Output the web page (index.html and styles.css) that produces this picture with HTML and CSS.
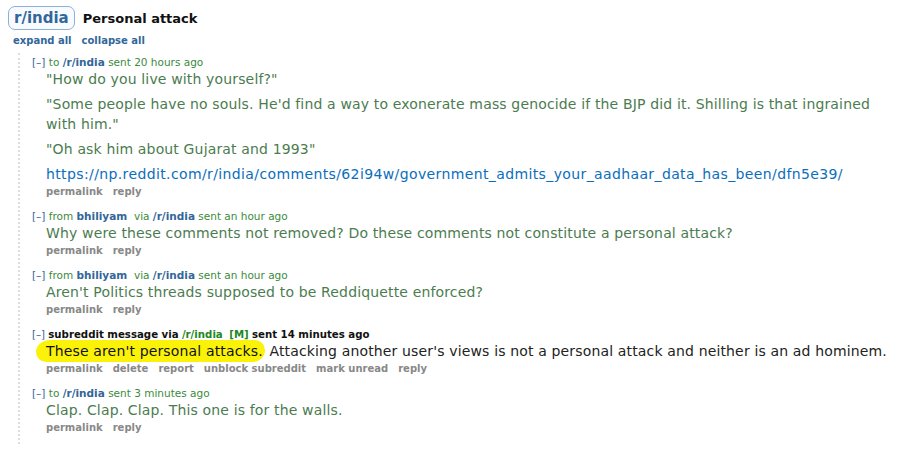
FILE: index.html
```html
<!DOCTYPE html>
<html>
<head>
<meta charset="utf-8">
<link rel="stylesheet" href="styles.css">
</head>
<body>
<div class="page">
  <div class="title-row">
    <span class="sr-pill">r/india</span>
    <span class="subject">Personal attack</span>
  </div>
  <div class="toggles"><a>expand all</a><a>collapse all</a></div>
  <div class="thread">
    <div class="msg">
      <div class="tagline"><span class="exp">[–]</span> to <a class="sr">/r/india</a> sent 20 hours ago</div>
      <div class="md">
        <p>"How do you live with yourself?"</p>
        <p>"Some people have no souls. He'd find a way to exonerate mass genocide if the BJP did it. Shilling is that ingrained with him."</p>
        <p>"Oh ask him about Gujarat and 1993"</p>
        <p><a class="link">https://np.reddit.com/r/india/comments/62i94w/government_admits_your_aadhaar_data_has_been/dfn5e39/</a></p>
      </div>
      <ul class="buttons"><li>permalink</li><li>reply</li></ul>
    </div>
    <div class="msg">
      <div class="tagline"><span class="exp">[–]</span> from <a class="user">bhiliyam</a>&nbsp; via <a class="sr">/r/india</a> sent an hour ago</div>
      <div class="md"><p>Why were these comments not removed? Do these comments not constitute a personal attack?</p></div>
      <ul class="buttons"><li>permalink</li><li>reply</li></ul>
    </div>
    <div class="msg">
      <div class="tagline"><span class="exp">[–]</span> from <a class="user">bhiliyam</a>&nbsp; via <a class="sr">/r/india</a> sent an hour ago</div>
      <div class="md"><p>Aren't Politics threads supposed to be Reddiquette enforced?</p></div>
      <ul class="buttons"><li>permalink</li><li>reply</li></ul>
    </div>
    <div class="msg mod">
      <div class="tagline"><span class="exp">[–]</span> <b>subreddit message via</b> <a class="sr mod-sr">/r/india</a>&nbsp; <b class="m">[M]</b> <b>sent 14 minutes ago</b></div>
      <div class="md"><p><mark class="hl">These aren't personal attacks.</mark> Attacking another user's views is not a personal attack and neither is an ad hominem.</p></div>
      <ul class="buttons"><li>permalink</li><li>delete</li><li>report</li><li>unblock subreddit</li><li>mark unread</li><li>reply</li></ul>
    </div>
    <div class="msg">
      <div class="tagline"><span class="exp">[–]</span> to <a class="sr">/r/india</a> sent 3 minutes ago</div>
      <div class="md"><p>Clap. Clap. Clap. This one is for the walls.</p></div>
      <ul class="buttons"><li>permalink</li><li>reply</li></ul>
    </div>
  </div>
</div>
</body>
</html>
```

FILE: styles.css
```css
html, body {
  margin: 0;
  padding: 0;
  background: #fff;
}
.page {
  font-family: "DejaVu Sans", Verdana, sans-serif;
  padding: 6px 0 0 8px;
}
.title-row {
  display: flex;
  align-items: center;
  gap: 8px;
  height: 24px;
}
.sr-pill {
  border: 1px solid #8fb0d3;
  border-radius: 7px;
  padding: 2px 5px 2px 5px;
  color: #336699;
  font-weight: bold;
  font-size: 15px;
  line-height: 18px;
  background: #f7faff;
}
.subject {
  font-weight: bold;
  font-size: 13px;
  color: #111;
}
.toggles {
  margin: 5px 0 0 5px;
  font-size: 10px;
  font-weight: bold;
  color: #336699;
  display: flex;
  gap: 10px;
  line-height: 12px;
}
.thread {
  margin: 6px 0 0 10px;
  border-left: 2px dotted #dddddd;
  padding: 3px 0 0 12px;
}
.msg {
  margin-bottom: 10px;
}
.msg:last-child {
  margin-bottom: 0;
  padding-bottom: 8px;
}
.tagline {
  font-size: 10.5px;
  line-height: 13px;
  color: #3c8a3c;
}
.exp {
  color: #336699;
}
.sr {
  color: #336699;
  font-weight: bold;
}
.user {
  color: #336699;
  font-weight: bold;
}
.mod .tagline {
  font-size: 10.2px;
}
.mod .tagline b {
  color: #111;
}
.mod .tagline .mod-sr, .mod .tagline b.m {
  color: #228822;
}
.md {
  margin-left: 14px;
  margin-right: 12px;
  font-size: 14px;
  letter-spacing: 0.15px;
  color: #4b7c4f;
  line-height: 20px;
}
.md p {
  margin: 0 0 5px;
}
.md p:last-child {
  margin-bottom: 0;
}
.mod .md {
  color: #222;
}
.hl {
  background: #fbf20a;
  color: #111;
  border-radius: 14px 10px 12px 10px / 12px 10px 12px 10px;
  padding: 3px 2px 3px 10px;
  margin-left: -10px;
}
.link {
  color: #0a6ebd;
  letter-spacing: 0.38px;
}
.buttons {
  list-style: none;
  margin: 0 0 0 14px;
  padding: 0;
  display: flex;
  gap: 10px;
  font-size: 10px;
  font-weight: bold;
  color: #888;
  line-height: 16px;
}
```
